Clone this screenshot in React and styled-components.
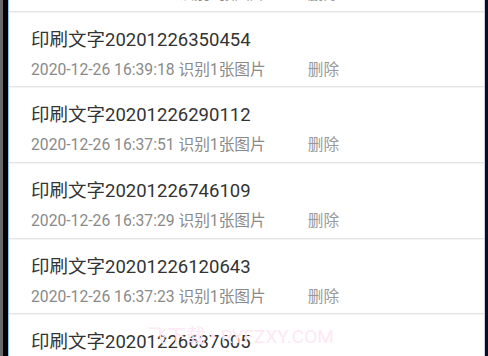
import React from 'react';
import styled, { createGlobalStyle } from 'styled-components';

const GlobalStyle = createGlobalStyle`
  html, body {
    margin: 0;
    padding: 0;
    background: #000;
    overflow: hidden;
  }
`;

const records = [
  { id: '20201226000000', time: '2020-12-26 16:40:02' },
  { id: '20201226350454', time: '2020-12-26 16:39:18' },
  { id: '20201226290112', time: '2020-12-26 16:37:51' },
  { id: '20201226746109', time: '2020-12-26 16:37:29' },
  { id: '20201226120643', time: '2020-12-26 16:37:23' },
  { id: '20201226637605', time: '2020-12-26 16:37:10' },
];

const Frame = styled.div`
  display: flex;
  width: 488px;
  height: 356px;
  overflow: hidden;
`;

const LeftBezel = styled.div`
  width: 8px;
  flex-shrink: 0;
  background: linear-gradient(to right, #6a6a6a 0, #6a6a6a 3px, #050505 3px);
  border-right: 1px solid #9cc0f5;
`;

const RightBezel = styled.div`
  width: 3px;
  flex-shrink: 0;
  background: #0a0f1c;
  border-left: 1px solid #c8d2e0;
`;

const Screen = styled.div`
  flex: 1;
  background: #fff;
  position: relative;
  overflow: hidden;
`;

const List = styled.div`
  margin-top: -64px;
  display: flex;
  flex-direction: column;
`;

const Row = styled.div`
  height: 74.7px;
  padding-left: 22px;
  display: flex;
  flex-direction: column;
  border-bottom: 1px solid #e4e4e4;
  box-shadow: 0 1px 1px rgba(0, 0, 0, 0.04);
  font-family: Roboto, "Noto Sans CJK SC", sans-serif;
`;

const Title = styled.div`
  margin-top: 16px;
  font-size: 18.5px;
  line-height: 24px;
  color: #333;
`;

const Meta = styled.div`
  margin-top: 7px;
  display: flex;
  font-size: 15.7px;
  line-height: 21px;
  color: #8a8a8a;
`;

const Delete = styled.span`
  margin-left: 42px;
  color: #999;
`;

const Watermark = styled.div`
  position: absolute;
  left: 139px;
  top: 321px;
  font-family: Roboto, "Noto Sans CJK SC", sans-serif;
  font-size: 19px;
  color: #fde8f4;
  pointer-events: none;
`;

export default function App() {
  return (
    <>
      <GlobalStyle />
      <Frame>
        <LeftBezel />
        <Screen>
          <List>
            {records.map((r) => (
              <Row key={r.id}>
                <Title>印刷文字{r.id}</Title>
                <Meta>
                  <span>{r.time} 识别1张图片</span>
                  <Delete>删除</Delete>
                </Meta>
              </Row>
            ))}
          </List>
          <Watermark>飞下载 • RYFZXY.COM</Watermark>
        </Screen>
        <RightBezel />
      </Frame>
    </>
  );
}
